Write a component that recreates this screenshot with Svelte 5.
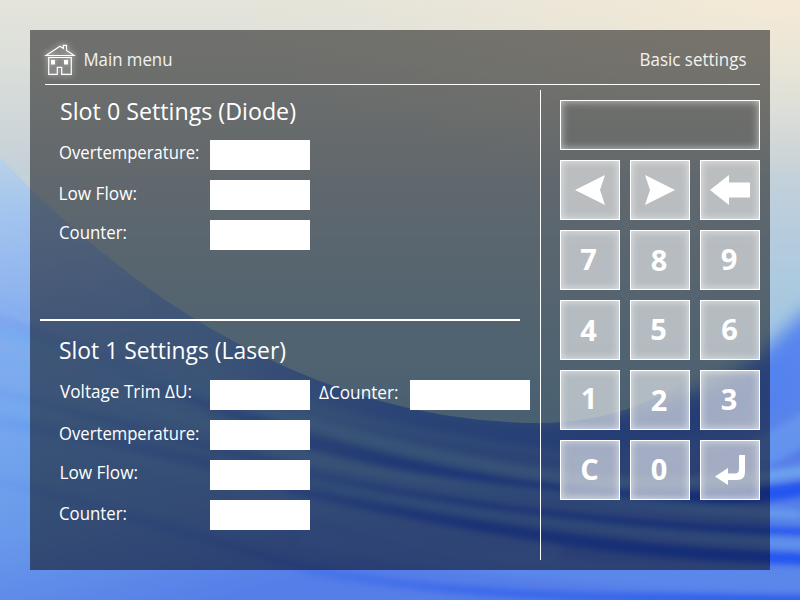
<script>
  const slots = [
    {
      id: 0,
      title: { text: 'Slot 0 Settings (Diode)', x: 1, y: 30, w: 236, size: 24 },
      rows: [
        [{ text: 'Overtemperature:', x: 0, y: 19, w: 140.5, field: 100 }],
        [{ text: 'Low Flow:', x: -0.5, y: 20, w: 78.5, field: 100 }],
        [{ text: 'Counter:', x: 0, y: 19, w: 68, field: 100 }]
      ]
    },
    {
      id: 1,
      title: { text: 'Slot 1 Settings (Laser)', x: 0, y: 40, w: 227, size: 24 },
      rows: [
        [
          { text: 'Voltage Trim ΔU:', x: 1, y: 18, w: 132, field: 100 },
          { text: 'ΔCounter:', x: 0, y: 19, w: 79.5, field: 120 }
        ],
        [{ text: 'Overtemperature:', x: 0, y: 20, w: 140.5, field: 100 }],
        [{ text: 'Low Flow:', x: 0.5, y: 19, w: 78.5, field: 100 }],
        [{ text: 'Counter:', x: 0, y: 20, w: 68, field: 100 }]
      ]
    }
  ];

  const keys = [
    { icon: 'left' }, { icon: 'right' }, { icon: 'back' },
    { label: '7', x: 27.5, y: 39 }, { label: '8', x: 28, y: 40 }, { label: '9', x: 28, y: 39 },
    { label: '4', x: 27.5, y: 40 }, { label: '5', x: 27.5, y: 39 }, { label: '6', x: 28.5, y: 39 },
    { label: '1', x: 28, y: 38 }, { label: '2', x: 28, y: 40 }, { label: '3', x: 28, y: 39 },
    { label: 'C', x: 28.5, y: 39 }, { label: '0', x: 28, y: 39 }, { icon: 'enter' }
  ];
</script>

{#snippet caption(t)}
  <svg class="caption" width={t.w} height="30">
    <text x={t.x} y={t.y} font-size={t.size ?? 18} textLength={t.w} lengthAdjust="spacingAndGlyphs">{t.text}</text>
  </svg>
{/snippet}

<div class="screen">
  <svg class="wallpaper" viewBox="0 0 800 600" preserveAspectRatio="none" aria-hidden="true">
    <defs>
      <linearGradient id="sky" gradientUnits="userSpaceOnUse" x1="0" y1="0" x2="0" y2="600">
        <stop offset="0" stop-color="#e4e4da" />
        <stop offset="0.1" stop-color="#dcdfda" />
        <stop offset="0.25" stop-color="#c9d3d8" />
        <stop offset="0.42" stop-color="#b2cbdf" />
        <stop offset="0.52" stop-color="#a6c8e0" />
        <stop offset="0.6" stop-color="#9fc6e2" />
        <stop offset="0.7" stop-color="#92c0e4" />
      </linearGradient>
      <radialGradient id="sun" gradientUnits="userSpaceOnUse" cx="0" cy="0" r="1" gradientTransform="translate(770 -10) scale(560 190)">
        <stop offset="0" stop-color="#f5ead6" />
        <stop offset="1" stop-color="#ece6d6" stop-opacity="0" />
      </radialGradient>
      <linearGradient id="sea" gradientUnits="userSpaceOnUse" x1="100" y1="150" x2="220" y2="600">
        <stop offset="0" stop-color="#a0c0f0" />
        <stop offset="0.3" stop-color="#88aeee" />
        <stop offset="0.5" stop-color="#76a8ee" />
        <stop offset="0.75" stop-color="#6899ea" />
        <stop offset="1" stop-color="#567ee8" />
      </linearGradient>
      <linearGradient id="leftFade" gradientUnits="userSpaceOnUse" x1="0" y1="0" x2="800" y2="0">
        <stop offset="0" stop-color="#3c70f0" stop-opacity="0.12" />
        <stop offset="0.35" stop-color="#3464e8" stop-opacity="0.4" />
        <stop offset="0.6" stop-color="#2a5eec" stop-opacity="0.8" />
        <stop offset="1" stop-color="#2254f0" />
      </linearGradient>
      <linearGradient id="deep" gradientUnits="userSpaceOnUse" x1="200" y1="0" x2="800" y2="0">
        <stop offset="0" stop-color="#5a84e8" stop-opacity="0" />
        <stop offset="0.35" stop-color="#4c80ee" stop-opacity="0.75" />
        <stop offset="0.8" stop-color="#4476ea" stop-opacity="0.85" />
        <stop offset="1" stop-color="#5482f0" stop-opacity="0.8" />
      </linearGradient>
      <linearGradient id="haze" gradientUnits="userSpaceOnUse" x1="0" y1="150" x2="0" y2="330">
        <stop offset="0" stop-color="#bcd4e4" />
        <stop offset="0.35" stop-color="#a8c8ee" stop-opacity="0.7" />
        <stop offset="1" stop-color="#90bcf0" stop-opacity="0" />
      </linearGradient>
      <clipPath id="wave"><path d="M0 158 Q75 237 165 300 Q350 423 540 423 C620 423 690 390 740 335 Q780 280 800 240 V600 H0Z" /></clipPath>
      <clipPath id="right"><path d="M541 200H800V600H541Z" /></clipPath>
      <filter id="b3" x="-10%" y="-50%" width="120%" height="200%"><feGaussianBlur stdDeviation="3" /></filter>
      <filter id="b8" x="-20%" y="-50%" width="140%" height="200%"><feGaussianBlur stdDeviation="9" /></filter>
    </defs>
    <rect width="800" height="600" fill="url(#sky)" />
    <rect width="800" height="300" fill="url(#sun)" />
    <g clip-path="url(#wave)">
      <path d="M0 150 H800 V600 H0Z" fill="url(#sea)" />
      <path d="M0 150H150V330H0Z" fill="url(#haze)" />
      <path d="M190 280 Q350 410 540 423 Q720 410 820 240 V400 Q700 450 540 460 Q350 440 190 350Z" fill="url(#deep)" filter="url(#b8)" />
      <g fill="none" filter="url(#b3)">
        <path d="M-10 317 Q150 379 310 441 Q450 480 540 490 Q680 510 810 488" stroke="url(#leftFade)" stroke-width="15" />
        <path d="M-10 330 Q170 382 333 430 Q470 468 600 481 Q710 486 810 470" stroke="#74aef0" stroke-width="11" stroke-opacity=".75" />
        <path d="M-10 355 Q130 400 310 459 Q460 492 800 515" stroke="#76aef0" stroke-width="9" stroke-opacity=".65" />
        <path d="M-10 298 Q170 362 330 412 Q450 442 600 460" stroke="#7cb0ee" stroke-width="8" stroke-opacity=".3" />
        <path d="M-10 405 Q120 450 230 480 Q400 540 560 554" stroke="#70a8f0" stroke-width="24" stroke-opacity=".25" />
        <path d="M-10 390 Q170 436 320 475 Q430 500 540 513 Q670 530 810 532" stroke="url(#leftFade)" stroke-width="7" />
        <path d="M-10 420 Q170 448 310 493 Q430 519 540 536 Q670 555 810 559" stroke="url(#leftFade)" stroke-width="12" />
        <path d="M-10 478 Q170 526 310 570 Q430 592 590 597 L810 600" stroke="url(#leftFade)" stroke-width="9" stroke-opacity=".8" />
        <path d="M300 468 Q530 514 810 515" stroke="#6298ee" stroke-width="7" stroke-opacity=".6" />
        <path d="M300 482 Q530 528 810 545" stroke="#6298ee" stroke-width="10" stroke-opacity=".75" />
        <path d="M300 535 Q520 578 810 580" stroke="#5e8eec" stroke-width="22" stroke-opacity=".6" />
        <path d="M755 455 Q780 445 810 425" stroke="#6ca0f2" stroke-width="30" stroke-opacity=".6" />
      </g>
    </g>
    <g clip-path="url(#right)">
      <path d="M500 215 H840 V285 Q800 312 770 345 Q735 380 680 396 Q620 413 500 418Z" fill="url(#sky)" filter="url(#b8)" />
    </g>
  </svg>

  <main class="panel">
    <header>
      <svg class="home" width="32" height="34" viewBox="44 43 32 34" fill="none" stroke="#fff" stroke-width="1.2">
        <path d="M46 55.5 60 46.3 63.3 48.4V45.4H66.5V50.5L74 55.5Z" />
        <path d="M48.7 57.5H71.3V74.4H61.7V67.4H57.3V74.4H48.7Z" />
        <path d="M51 60h4v4.5h-4zM64 60h4v4.5h-4z" fill="#fff" stroke="none" />
      </svg>
      {@render caption({ text: 'Main menu', x: -0.5, y: 21, w: 89 })}
      <span class="spacer"></span>
      {@render caption({ text: 'Basic settings', x: -0.5, y: 21, w: 107 })}
    </header>

    <div class="body">
      <section class="settings">
        {#each slots as slot (slot.id)}
          <div class="slot">
            <div class="title">{@render caption(slot.title)}</div>
            {#each slot.rows as row}
              <div class="row">
                {#each row as f}
                  <span class="label">{@render caption(f)}</span>
                  <span class="field" style="width: {f.field}px"></span>
                {/each}
              </div>
            {/each}
          </div>
        {/each}
      </section>

      <section class="keypad">
        <div class="display"></div>
        {#each keys as key}
          <button class="key" aria-label={key.label ?? key.icon}>
            <svg width="58" height="58" viewBox="0 0 58 58" fill="#fff">
              {#if key.icon === 'left'}
                <path d="M14 29 44 14 39 29 44 44Z" />
              {:else if key.icon === 'right'}
                <path d="M44 29 14 14 19 29 14 44Z" />
              {:else if key.icon === 'back'}
                <path d="M9 29 28 14V21.5H49V36.5H28V44Z" />
              {:else if key.icon === 'enter'}
                <path d="M38 14H44V31Q44 39 36 39H27V44L14 35.5 27 27V32.5H34Q38 32.5 38 28Z" />
              {:else}
                <text x={key.x} y={key.y} text-anchor="middle">{key.label}</text>
              {/if}
            </svg>
          </button>
        {/each}
      </section>
    </div>
  </main>
</div>

<style>
  :global(body) { margin: 0; }
  .screen {
    position: relative;
    box-sizing: border-box;
    width: 800px;
    height: 600px;
    padding: 30px;
    overflow: hidden;
    font-family: "Open Sans", "Noto Sans", sans-serif;
  }
  .wallpaper { position: absolute; inset: 0; width: 800px; height: 600px; }
  .panel {
    position: relative;
    width: 740px;
    height: 540px;
    background: rgba(0, 0, 0, 0.5);
  }
  header {
    display: flex;
    align-items: center;
    box-sizing: border-box;
    height: 55px;
    margin: 0 10px 0 15px;
    padding: 6px 13px 0 0;
    border-bottom: 1px solid #fff;
  }
  header .caption { fill: #f2f2f2; }
  .home {
    margin: -1px 8px 0 -1px;
    overflow: visible;
    filter: drop-shadow(0 0 3px rgba(255, 255, 255, 0.9));
  }
  .spacer { flex: 1; }
  .caption { display: block; flex: none; overflow: visible; fill: #fff; }
  .body { display: flex; padding-top: 5px; }
  .settings {
    box-sizing: border-box;
    width: 511px;
    height: 470px;
    border-right: 1px solid #fff;
  }
  .slot { box-sizing: border-box; height: 229px; margin-left: 10px; padding-left: 19px; }
  .slot + .slot { position: relative; height: 240px; }
  .slot + .slot::before {
    content: "";
    position: absolute;
    left: 0;
    top: 0;
    width: 480px;
    height: 2px;
    background: #fff;
  }
  .title { height: 50px; }
  .slot + .slot .title { height: 61px; }
  .row { display: flex; height: 30px; margin-bottom: 10px; }
  .label { flex: none; width: 151px; }
  .field + .label { width: 91px; margin-left: 9px; }
  .field { flex: none; height: 30px; background: #fff; }
  .keypad {
    display: grid;
    grid-template-columns: repeat(3, 60px);
    grid-template-rows: 50px repeat(5, 60px);
    gap: 10px;
    padding: 10px 0 0 19px;
  }
  .display, .key {
    box-sizing: border-box;
    border: 1px solid #fff;
    box-shadow: inset 0 0 8px rgba(255, 255, 255, 0.65);
  }
  .display { grid-column: 1 / -1; }
  .key { margin: 0; padding: 0; background: rgba(255, 255, 255, 0.57); }
  .key svg { display: block; font: bold 29px "Open Sans", "Noto Sans", sans-serif; }
</style>
